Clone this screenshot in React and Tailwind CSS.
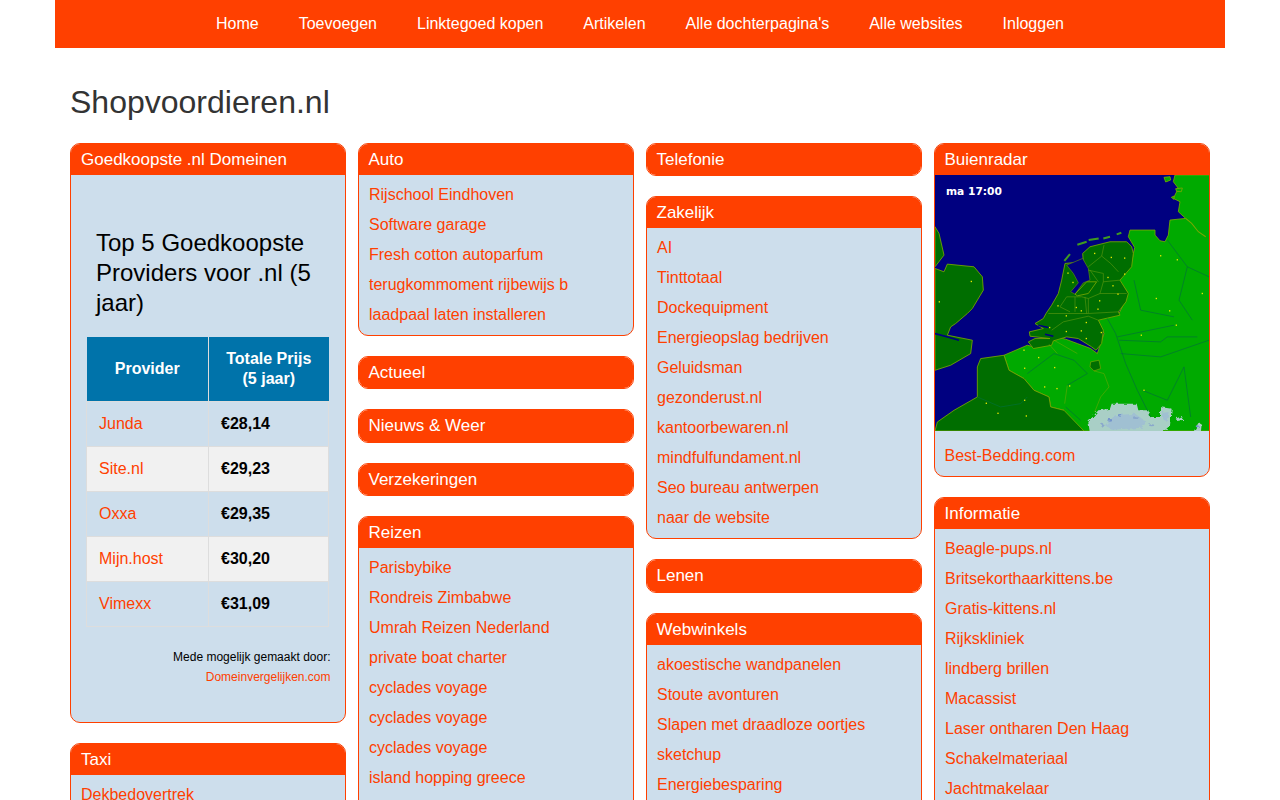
import React from 'react';

const navItems = ['Home', 'Toevoegen', 'Linktegoed kopen', 'Artikelen', "Alle dochterpagina's", 'Alle websites', 'Inloggen'];

const providers = [
  ['Junda', '€28,14'],
  ['Site.nl', '€29,23'],
  ['Oxxa', '€29,35'],
  ['Mijn.host', '€30,20'],
  ['Vimexx', '€31,09'],
];

const Panel = ({ title, items, wide, children }) => (
  <div className="mb-5 overflow-hidden rounded-[10px] border border-[#ff4000] bg-[#cddeec]">
    <div className={`h-[31.2px] bg-[#ff4000] text-[17px] leading-[31px] text-white ${wide ? 'px-[10px]' : 'px-[9.5px]'}`}>{title}</div>
    {items && (
      <ul className="pb-[10px]">
        {items.map((item, i) => (
          <li key={i} className="h-[30px] px-[10px] text-base leading-[40px] text-[#ff4000]">{item}</li>
        ))}
      </ul>
    )}
    {children}
  </div>
);

const coast = { stroke: '#7aa800', strokeWidth: 2.5 };

const cities = [
  [480,338],[530,350],[570,352],[400,397],[415,425],[520,410],[570,400],[550,460],[495,480],[425,500],[370,495],[395,572],[440,570],[455,593],
  [268,628],[312,650],[360,680],[270,682],[330,738],[367,743],[405,735],[155,787],[190,817],[270,778],[275,825],[110,422],[14,483],[678,345],
  [665,473],[705,510],[725,553],[620,583],[628,748],[803,458],[728,357],[395,525],[440,510],[490,505],[535,435],[455,545],[500,575],[345,560],
];

const RadarMap = () => (
  <svg viewBox="3 105 822 767" className="block h-[256px] w-full" preserveAspectRatio="none">
    <defs>
      <filter id="rough" x="-10%" y="-10%" width="120%" height="120%">
        <feTurbulence type="fractalNoise" baseFrequency="0.08" numOctaves="2" seed="4" />
        <feDisplacementMap in="SourceGraphic" scale="14" />
      </filter>
    </defs>
    <rect x="0" y="100" width="830" height="780" fill="#000080" />
    {/* Germany, Denmark, Belgium */}
    <path d="M723 105L718 125L733 145L718 175L738 185L733 215L755 235L708 240L703 285L693 305L678 302L663 285L663 270L588 270L583 290L602 322L590 380L555 420L580 455L575 480L555 520L490 535L510 580L490 640L470 625L430 610L395 597L365 590L345 612L300 620L280 615L210 645L225 690L270 715L300 750L345 770L350 800L390 810L400 830L450 872L830 872L830 105Z" fill="#00aa00" {...coast} />
    <path d="M755 235L773 250L793 275L815 290" fill="none" stroke="#7aa800" strokeWidth="3" />
    <path d="M690 112L708 110L710 120L695 126Z M725 146L745 144L742 155L728 154Z M712 172L720 168L720 178Z" fill="#00aa00" {...coast} />
    {/* France */}
    <path d="M3 872L10 845L60 810L130 770L130 680L140 655L210 645L225 690L270 715L300 750L345 770L350 800L390 810L450 872Z" fill="#006e00" {...coast} />
    {/* UK */}
    <path d="M3 385L30 395L40 372L120 380L145 410L148 450L115 505L100 520L65 550L50 560L40 585L115 600L110 640L50 675L3 690Z" fill="#006e00" {...coast} />
    <path d="M3 260L15 280L30 345L3 380Z" fill="#006e00" {...coast} />
    <path d="M3 580L40 590L75 600" fill="none" stroke="#000080" strokeWidth="5" />

    {/* Netherlands, drawn in its own local coordinates */}
    <g transform="translate(258 270)">
      <path d="M335 50L340 70L335 110L300 150L325 190L318 215L295 245L300 255L235 270L250 300L245 340L228 360L215 350L175 325L140 320L100 332L95 345L40 355L25 335L45 325L90 325L30 318L28 305L70 295L45 280L70 265L78 250L95 225L115 190L125 150L135 100L190 95L188 70L210 50L270 35L320 35Z" fill="#006e00" {...coast} />
      {/* IJsselmeer and Flevoland */}
      <path d="M140 105L188 85L205 115L210 150L190 158L165 192L152 185L175 158L160 130Z" fill="#000080" stroke="#5f8a10" strokeWidth="2" />
      <path d="M165 192L200 155L230 155L205 190L172 197Z" fill="#006e00" {...coast} />
      {/* Wadden islands */}
      <path d="M133 92L150 72M172 44L200 35M206 30L236 25M250 25L270 20M290 13L304 8" fill="none" stroke="#3f9a20" strokeWidth="6" />
      <path d="M55 285L85 292M75 312L100 318" fill="none" stroke="#000080" strokeWidth="5" />
      {/* Province borders */}
      <path d="M252 45L245 78L205 110M245 78L272 100L295 125M205 120L250 130L250 155L300 150M250 155L240 190L205 205L185 200L140 200L120 230M240 190L320 190M205 205L205 250L295 245M85 250L205 250M120 230L150 245M130 275L205 258L235 270M130 275L95 300M210 120L235 155M195 200L200 250M165 200L165 245" fill="none" stroke="#5f9a10" strokeWidth="1.8" />
    </g>

    {/* Luxembourg and Belgian borders */}
    <path d="M470 665L495 660L500 685L480 692L468 680Z" fill="#006e00" stroke="#7aa800" strokeWidth="2" />
    <path d="M480 692L510 700L525 740L500 770L482 815M400 735L392 790M345 612L370 640M360 600L430 640" fill="none" stroke="#7aa800" strokeWidth="1.5" />

    {/* Rivers */}
    <path d="M520 535L545 580L575 670L610 750L650 830M550 590L720 555M555 600L680 605L700 590L790 590M600 420L620 510L720 530M760 380L735 480L775 540M700 300L760 380L825 410M280 700L360 640L420 660L460 700L400 735M130 770L200 800L260 790L280 770M625 750L700 780L750 680M560 640L680 650L825 600M440 840L395 800M750 680L770 830" fill="none" stroke="#00703a" strokeWidth="2" />

    {/* Rain */}
    <g transform="translate(408 720)" filter="url(#rough)">
      <path d="M55 125L85 90L120 85L125 70L200 70L205 90L235 90L240 110L270 110L270 80L305 85L300 135L275 160L60 160Z" fill="#a9cfc6" />
      <path d="M105 135L135 105L195 100L230 125L215 142L125 148Z" fill="#a0c0d2" />
      <path d="M278 98L296 95L290 122L280 118Z" fill="#a0c0d2" />
      <ellipse cx="150" cy="105" rx="7" ry="4" fill="#7595cc" />
      <ellipse cx="120" cy="120" rx="8" ry="4" fill="#7595cc" />
      <ellipse cx="200" cy="115" rx="9" ry="4" fill="#8aa8cc" />
      <ellipse cx="98" cy="135" rx="5" ry="5" fill="#8aa8cc" />
      <ellipse cx="245" cy="135" rx="8" ry="3" fill="#8aa8cc" />
      <path d="M317 115L335 107L340 118L322 122Z M370 155L385 128L395 132L392 160L372 160Z" fill="#a9cfc6" />
      <ellipse cx="382" cy="138" rx="5" ry="3" fill="#7595cc" />
    </g>

    {/* Cities */}
    {cities.map(([x, y], i) => (
      <rect key={i} x={x} y={y} width="4" height="4" fill="#e8e800" />
    ))}
    <text x="36" y="165" fill="#ffffff" fontSize="32" fontWeight="700" fontFamily="'DejaVu Sans', sans-serif">ma 17:00</text>
  </svg>
);

const ProviderTable = () => (
  <table className="ml-[5px] w-[243px] table-fixed border-collapse text-base">
    <thead>
      <tr className="h-[64px] bg-[#0073aa] text-white">
        <th className="w-[122px] border border-[#dddddd] border-t-0 border-l-0 px-2 font-bold leading-[20px]">Provider</th>
        <th className="border border-[#dddddd] border-t-0 border-r-0 px-2 font-bold leading-[20px]">Totale Prijs<br />(5 jaar)</th>
      </tr>
    </thead>
    <tbody>
      {providers.map(([name, price], i) => (
        <tr key={name} className={`h-[45px] ${i % 2 === 1 ? 'bg-[#f1f1f1]' : ''}`}>
          <td className="border border-[#dddddd] pl-3 text-[#ff4000]">{name}</td>
          <td className="border border-[#dddddd] pl-3 font-bold text-black">{price}</td>
        </tr>
      ))}
    </tbody>
  </table>
);

export default function App() {
  return (
    <div className="h-screen overflow-hidden bg-white font-['Liberation_Sans',Arial,sans-serif]">
      <div className="mx-auto w-[1170px]">
        <nav className="flex h-12 justify-center bg-[#ff4000] text-base leading-[48px] text-white">
          {navItems.map((item) => (
            <span key={item} className="px-5">{item}</span>
          ))}
        </nav>

        <div className="px-[15px]">
          <h1 className="pt-[36px] pb-[23px] text-[32px] leading-[36px] text-[#333333]">Shopvoordieren.nl</h1>

          <div className="grid grid-cols-4 items-start gap-x-3">
            <div>
              <Panel title="Goedkoopste .nl Domeinen" wide>
                <div className="pt-[53px] pr-[14.5px] pb-[35px] pl-[10px]">
                  <h2 className="mb-[19px] pl-[15px] text-2xl leading-[30px] text-black">Top 5 Goedkoopste Providers voor .nl (5 jaar)</h2>
                  <ProviderTable />
                  <p className="mt-[20px] text-right text-xs leading-[20px] text-black">Mede mogelijk gemaakt door:</p>
                  <p className="text-right text-xs leading-[20px] text-[#ff4000]">Domeinvergelijken.com</p>
                </div>
              </Panel>
              <Panel title="Taxi" wide items={['Dekbedovertrek', 'Taxi Amsterdam']} />
            </div>

            <div>
              <Panel title="Auto" items={['Rijschool Eindhoven', 'Software garage', 'Fresh cotton autoparfum', 'terugkommoment rijbewijs b', 'laadpaal laten installeren']} />
              <Panel title="Actueel" />
              <Panel title="Nieuws & Weer" />
              <Panel title="Verzekeringen" />
              <Panel title="Reizen" items={['Parisbybike', 'Rondreis Zimbabwe', 'Umrah Reizen Nederland', 'private boat charter', 'cyclades voyage', 'cyclades voyage', 'cyclades voyage', 'island hopping greece', 'cyclades voyage']} />
            </div>

            <div>
              <Panel title="Telefonie" />
              <Panel title="Zakelijk" items={['AI', 'Tinttotaal', 'Dockequipment', 'Energieopslag bedrijven', 'Geluidsman', 'gezonderust.nl', 'kantoorbewaren.nl', 'mindfulfundament.nl', 'Seo bureau antwerpen', 'naar de website']} />
              <Panel title="Lenen" />
              <Panel title="Webwinkels" items={['akoestische wandpanelen', 'Stoute avonturen', 'Slapen met draadloze oortjes', 'sketchup', 'Energiebesparing', 'Webshop']} />
            </div>

            <div>
              <Panel title="Buienradar">
                <RadarMap />
                <div className="h-[44.8px] px-[9.5px] text-base leading-[50px] text-[#ff4000]">Best-Bedding.com</div>
              </Panel>
              <Panel title="Informatie" items={['Beagle-pups.nl', 'Britsekorthaarkittens.be', 'Gratis-kittens.nl', 'Rijkskliniek', 'lindberg brillen', 'Macassist', 'Laser ontharen Den Haag', 'Schakelmateriaal', 'Jachtmakelaar', 'Webshop']} />
            </div>
          </div>
        </div>
      </div>
    </div>
  );
}
